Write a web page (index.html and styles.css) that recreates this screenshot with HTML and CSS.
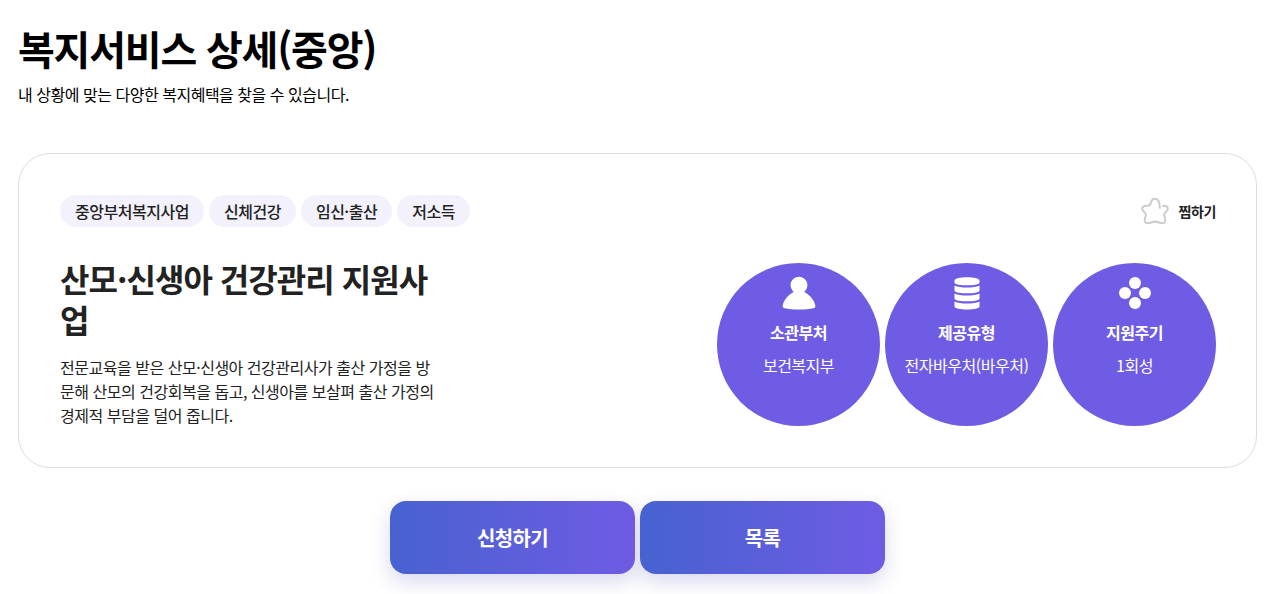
FILE: index.html
```html
<!DOCTYPE html>
<html lang="ko">
<head>
<meta charset="utf-8">
<meta name="viewport" content="width=device-width, initial-scale=1">
<title>복지서비스 상세(중앙)</title>
<link rel="stylesheet" href="styles.css">
</head>
<body>
<main class="page">
  <header class="page-header">
    <h1 class="page-title">복지서비스 상세(중앙)</h1>
    <p class="page-lead">내 상황에 맞는 다양한 복지혜택을 찾을 수 있습니다.</p>
  </header>
  <section class="card">
    <div class="card-top">
      <ul class="tags">
        <li class="tag">중앙부처복지사업</li>
        <li class="tag">신체건강</li>
        <li class="tag">임신·출산</li>
        <li class="tag">저소득</li>
      </ul>
      <button class="favorite" type="button">
        <svg class="favorite-icon" viewBox="0 0 28 28" aria-hidden="true"><path d="M18.800 10.800L18.300 6.500C17.700 3.600 16.200 1.800 14 1.800S10.300 3.600 9.700 6.300C9.200 8.400 8.500 8.900 6.400 8.800C3.500 8.600 1.600 9.300 1.300 11.200C1 13 2.300 14.300 3.700 15.400C5 16.500 5.200 17.300 4.600 19C3.600 21.700 3.100 24.100 4.600 25.400C6 26.600 8.200 26.200 10.700 25.200C13 24.400 15 24.400 17.300 25.200C19.800 26.200 22 26.600 23.400 25.400C24.900 24.100 24.400 21.700 23.400 19C22.800 17.300 23 16.500 24.300 15.400C25.700 14.300 27 13 26.700 11.200C26.400 9.300 24.500 8.700 22 8.900"/></svg>
        <span>찜하기</span>
      </button>
    </div>
    <div class="card-body">
      <div class="summary">
        <h2 class="service-name">산모·신생아 건강관리 지원사업</h2>
        <p class="service-text">전문교육을 받은 산모·신생아 건강관리사가 출산 가정을 방문해 산모의 건강회복을 돕고, 신생아를 보살펴 출산 가정의 경제적 부담을 덜어 줍니다.</p>
      </div>
      <dl class="facts">
        <div class="fact">
          <svg class="fact-icon" viewBox="0 0 34 34" aria-hidden="true"><path d="M17 .8C12.300 .8 8.600 4.500 8.600 9C8.600 11.800 9.800 14.200 11.800 15.900C6.500 18.500 1.400 24 .6 30Q.4 31.600 2.300 32.200C10 34 24 34 31.700 32.200Q33.600 31.600 33.400 30C32.600 24 27.500 18.500 22.200 15.900C24.200 14.200 25.400 11.800 25.400 9C25.400 4.500 21.700 .8 17 .8Z"/></svg>
          <dt>소관부처</dt><dd>보건복지부</dd>
        </div>
        <div class="fact">
          <svg class="fact-icon" viewBox="0 0 34 34" aria-hidden="true"><path d="M4.500 4.500C4.500 0 29.500 0 29.500 4.500V6.500C29.500 10.300 4.500 10.300 4.500 6.500ZM4.500 9.500C10 12.300 24 12.300 29.500 9.500V14.500C29.500 18.300 4.500 18.300 4.500 14.500ZM4.500 17.500C10 20.300 24 20.300 29.500 17.500V22.500C29.500 26.300 4.500 26.300 4.500 22.500ZM4.500 25.500C10 28.300 24 28.300 29.500 25.500V30.500C29.500 34.500 4.500 34.500 4.500 30.500Z"/></svg>
          <dt>제공유형</dt><dd>전자바우처(바우처)</dd>
        </div>
        <div class="fact">
          <svg class="fact-icon" viewBox="0 0 34 34" aria-hidden="true"><circle cx="17" cy="7" r="6"/><circle cx="7" cy="17" r="6"/><circle cx="27" cy="17" r="6"/><circle cx="17" cy="27" r="6"/></svg>
          <dt>지원주기</dt><dd>1회성</dd>
        </div>
      </dl>
    </div>
  </section>
  <div class="actions">
    <button class="action" type="button">신청하기</button>
    <button class="action" type="button">목록</button>
  </div>
</main>
</body>
</html>
```
FILE: styles.css
```css
* { box-sizing: border-box; letter-spacing: -0.03em; }
body { margin: 0; background: #fff; color: #000; font-family: "Noto Sans CJK KR", sans-serif; }
h1, h2, p, ul, dl, dd { margin: 0; padding: 0; }
button { border: 0; font: inherit; cursor: pointer; }
.page { padding: 18px 23px 20px 18px; }
.page-title { font-size: 40px; line-height: 60px; font-weight: 700; }
.page-lead { margin-top: 4px; font-size: 16px; line-height: 24px; }
.card { margin-top: 47px; padding: 41px 40px 40px 41px; border: 1px solid #ddd; border-radius: 32px; }
.card-top { display: flex; justify-content: space-between; align-items: center; }
.tags { display: flex; gap: 5px; list-style: none; }
.tag { padding: 0 15px; border-radius: 16px; background: #f3f1fb; color: #222; font-size: 16px; line-height: 32px; font-weight: 500; }
.favorite { display: flex; align-items: center; gap: 10px; padding: 0; background: none; color: #222; font-size: 14px; line-height: 24px; font-weight: 700; }
.favorite-icon { width: 28px; height: 28px; fill: none; stroke: #ccc; stroke-width: 2; stroke-linecap: round; }
.card-body { display: flex; justify-content: space-between; align-items: flex-start; margin-top: 31px; }
.summary { width: 376px; }
.service-name { color: #222; font-size: 32px; line-height: 41px; font-weight: 700; word-break: break-all; }
.service-text { margin-top: 15px; color: #222; font-size: 16px; line-height: 24px; word-break: break-all; }
.facts { display: flex; gap: 5px; margin-top: 5px; }
.fact { display: flex; flex-direction: column; align-items: center; width: 163px; aspect-ratio: 1; padding-top: 13px; border-radius: 50%; background: #6f5ce4; color: #fff; font-size: 16px; line-height: 24px; }
.fact-icon { width: 34px; height: 34px; fill: #fff; }
.fact dt { margin-top: 10px; font-weight: 700; }
.fact dd { margin-top: 9px; }
.actions { display: flex; justify-content: center; gap: 5px; margin-top: 33px; }
.action { width: 245px; padding: 20px; border-radius: 16px; background: linear-gradient(90deg, #4762d0, #6f5ce4); box-shadow: 0 8px 20px rgb(80 80 180 / 22%); color: #fff; font-size: 20px; line-height: 33px; font-weight: 700; }
```
